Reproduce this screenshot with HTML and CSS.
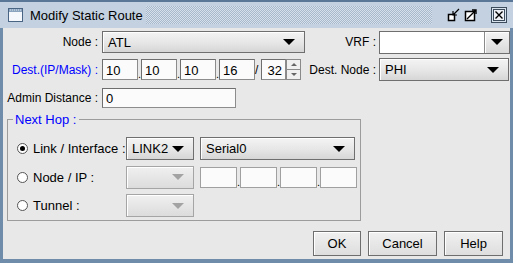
FILE: index.html
```html
<!DOCTYPE html>
<html lang="en">
<head>
  <meta charset="UTF-8" />
  <title>Modify Static Route</title>
  <link rel="stylesheet" href="styles.css">
</head>
<body>
  <div class="dialog">
    <div class="titlebar">
      <svg class="appicon" width="15" height="14" viewBox="0 0 15 14">
        <rect x="0.5" y="0.5" width="14" height="13" fill="#f4f8fc" stroke="#4a6584"/>
        <rect x="1" y="1" width="13" height="3" fill="#8aa4c0"/>
        <path d="M2 2h1M4 2h1M6 2h1M8 2h1M10 2h1M12 2h1" stroke="#dfe8f2"/>
      </svg>
      <span class="title">Modify Static Route</span>
      <span class="dots"></span>
      <svg class="tbtn" width="14" height="14" viewBox="0 0 14 14">
        <rect x="1.5" y="6.5" width="6" height="6" fill="#fff" stroke="#000" stroke-width="1.5"/>
        <path d="M12 1L6 7M6 3v4h4" fill="none" stroke="#000" stroke-width="1.2"/>
      </svg>
      <svg class="tbtn" width="14" height="14" viewBox="0 0 14 14">
        <rect x="1.5" y="3.5" width="9" height="9" fill="#fff" stroke="#000" stroke-width="1.5"/>
        <path d="M3 11L12 2M8 2h4v4" fill="none" stroke="#000" stroke-width="1.4"/>
      </svg>
      <svg class="tbtn close" width="16" height="16" viewBox="0 0 16 16">
        <rect x="0.5" y="0.5" width="15" height="15" fill="#d8e2ec" stroke="#3c4c5c"/>
        <rect x="2.5" y="2.5" width="11" height="11" fill="#eef2f6" stroke="#3c4c5c"/>
        <path d="M4.5 4.5l7 7M11.5 4.5l-7 7" stroke="#000" stroke-width="1.4"/>
      </svg>
    </div>

    <div class="content">
      <div class="row">
        <label class="lbl w-main">Node :</label>
        <div class="combo w-node"><span>ATL</span><i class="arrow"></i></div>
        <label class="lbl w-vrf">VRF :</label>
        <div class="ecombo w-vrfbox"><span class="field"></span><span class="abtn"><i class="arrow"></i></span></div>
      </div>

      <div class="row r2">
        <label class="lbl w-main blue">Dest.(IP/Mask) :</label>
        <div class="ip">
          <input class="txt oct" value="10"><span class="dot">.</span>
          <input class="txt oct" value="10"><span class="dot">.</span>
          <input class="txt oct" value="10"><span class="dot">.</span>
          <input class="txt oct" value="16"><span class="slash">/</span>
          <input class="txt mask" value="32">
          <span class="spin"><b class="up"></b><b class="down"></b></span>
        </div>
        <label class="lbl w-dest">Dest. Node :</label>
        <div class="combo w-phi"><span>PHI</span><i class="arrow"></i></div>
      </div>

      <div class="row r3">
        <label class="lbl w-main">Admin Distance :</label>
        <input class="txt admin" value="0">
      </div>

      <fieldset class="group">
        <legend>Next Hop :</legend>
        <div class="hop">
          <span class="radio on"></span><span class="hlbl">Link / Interface :</span>
          <div class="combo small"><span>LINK2</span><i class="arrow"></i></div>
          <div class="combo serial"><span>Serial0</span><i class="arrow"></i></div>
        </div>
        <div class="hop">
          <span class="radio"></span><span class="hlbl">Node / IP :</span>
          <div class="combo small off"><span></span><i class="arrow"></i></div>
          <div class="ip hopip">
            <input class="txt oct2"><span class="dot">.</span>
            <input class="txt oct2"><span class="dot">.</span>
            <input class="txt oct2"><span class="dot">.</span>
            <input class="txt oct2">
          </div>
        </div>
        <div class="hop">
          <span class="radio"></span><span class="hlbl">Tunnel :</span>
          <div class="combo small off"><span></span><i class="arrow"></i></div>
        </div>
      </fieldset>

      <div class="buttons">
        <button class="btn ok">OK</button>
        <button class="btn cancel">Cancel</button>
        <button class="btn help">Help</button>
      </div>
    </div>
  </div>
</body>
</html>
```

FILE: styles.css
```css
body {
  margin: 0;
  font-family: "Liberation Sans", Arial, sans-serif;
  font-size: 12px;
  color: #000;
}
.dialog {
  width: 513px;
  height: 263px;
  box-sizing: border-box;
  background: #6f8cab;
  display: flex;
  flex-direction: column;
}
.titlebar {
  height: 28px;
  box-sizing: border-box;
  display: flex;
  align-items: center;
  padding: 0 6px 0 8px;
  border-top: 2px solid #5b7797;
  background: #c3d1e0;
}
.appicon {
  margin-right: 7px;
}
.title {
  font-size: 13px;
  color: #000;
}
.dots {
  flex: 1;
  height: 18px;
  margin: 0 12px 0 3px;
  background: repeating-conic-gradient(#a8b9cc 0 25%, #d6e0ec 0 50%) 0 0 / 2px 2px;
}
.tbtn {
  margin-left: 3px;
}
.tbtn.close {
  margin-left: 13px;
}
.content {
  flex: 1;
  margin: 0 3px 4px 3px;
  background: #e8e8e8;
  padding-top: 3px;
  display: flex;
  flex-direction: column;
}
.row {
  display: flex;
  align-items: center;
  height: 22px;
}
.r2 {
  margin-top: 5px;
  height: 23px;
}
.r3 {
  margin-top: 6px;
  height: 21px;
}
.lbl {
  text-align: right;
  white-space: nowrap;
}
.blue {
  color: #0000ff;
}
.w-main {
  width: 95px;
  margin-right: 4px;
}
.w-vrf {
  width: 71px;
  margin-right: 3px;
}
.w-dest {
  width: 75px;
  margin-right: 3px;
}
.combo {
  box-sizing: border-box;
  height: 22px;
  border: 1px solid #6f6f6f;
  box-shadow: inset 1px 1px 0 #fff;
  background: linear-gradient(#f4f4f4, #e6e6e6 55%, #d6d6d6);
  display: flex;
  align-items: center;
  justify-content: space-between;
  padding: 0 9px 0 5px;
  font-size: 13px;
}
.w-node {
  width: 203px;
}
.w-phi {
  width: 130px;
  height: 23px;
}
.arrow {
  width: 0;
  height: 0;
  border-left: 6px solid transparent;
  border-right: 6px solid transparent;
  border-top: 6px solid #000;
}
.ecombo {
  box-sizing: border-box;
  width: 131px;
  height: 23px;
  border: 1px solid #6f6f6f;
  display: flex;
}
.ecombo .field {
  flex: 1;
  background: #fff;
  border-right: 1px solid #8a8a8a;
}
.ecombo .abtn {
  width: 24px;
  display: flex;
  align-items: center;
  justify-content: center;
  background: linear-gradient(#f4f4f4, #d9d9d9);
  box-shadow: inset 1px 1px 0 #fff;
}
.txt {
  box-sizing: border-box;
  height: 21px;
  margin: 0;
  border: 1px solid #8c8c8c;
  border-top-color: #6e6e6e;
  border-left-color: #6e6e6e;
  background: #fbfbfb;
  font-family: inherit;
  font-size: 13px;
  padding: 2px 2px 0 3px;
  color: #000;
}
.ip {
  display: flex;
  align-items: flex-end;
}
.oct {
  width: 36px;
}
.dot {
  width: 3px;
  font-size: 11px;
  line-height: 12px;
}
.slash {
  width: 6px;
  font-size: 12px;
  line-height: 19px;
}
.mask {
  width: 25px;
  text-align: right;
  padding-right: 3px;
}
.spin {
  width: 15px;
  height: 21px;
  display: flex;
  flex-direction: column;
}
.spin b {
  flex: 1;
  border: 1px solid #8a8a8a;
  background: #f0f0f0;
  position: relative;
}
.spin b.up {
  border-bottom: none;
}
.spin b::after {
  content: "";
  position: absolute;
  left: 4px;
  top: 3px;
  border-left: 3px solid transparent;
  border-right: 3px solid transparent;
}
.spin b.up::after {
  border-bottom: 3px solid #666;
}
.spin b.down::after {
  border-top: 3px solid #666;
}
.admin {
  width: 134px;
  height: 20px;
}
.group {
  margin: 4px 0 0 4px;
  width: 354px;
  height: 109px;
  box-sizing: border-box;
  border: 1px solid #9c9c9c;
  padding: 10px 0 0 9px;
}
.group legend {
  color: #0000ff;
  font-size: 13px;
  padding: 0 3px 0 2px;
  margin-left: -4px;
}
.hop {
  display: flex;
  align-items: center;
  height: 23px;
  margin-bottom: 5.5px;
}
.radio {
  width: 11px;
  height: 11px;
  border: 1px solid #555;
  border-radius: 50%;
  background: #fff;
  box-sizing: border-box;
  display: flex;
  align-items: center;
  justify-content: center;
}
.radio.on::after {
  content: "";
  width: 5px;
  height: 5px;
  border-radius: 50%;
  background: #000;
}
.hlbl {
  width: 93px;
  margin-left: 5px;
  font-size: 13px;
}
.small {
  width: 68px;
  height: 23px;
}
.serial {
  width: 155px;
  height: 23px;
  margin-left: 6px;
}
.combo.off {
  border-color: #a5a5a5;
  background: linear-gradient(#f0f0f0, #dcdcdc);
}
.combo.off .arrow {
  border-top-color: #a3a3a3;
}
.hopip {
  margin-left: 6px;
}
.oct2 {
  width: 37px;
  height: 21px;
  border-color: #a0a0a0;
}
.hopip .dot {
  width: 3px;
}
.buttons {
  display: flex;
  justify-content: flex-end;
  gap: 7px;
  margin-top: 10px;
  padding-right: 7px;
}
.btn {
  height: 25px;
  box-sizing: border-box;
  border: 1px solid #6e6e6e;
  box-shadow: inset 1px 1px 0 #fff;
  background: linear-gradient(#f0f0f0, #dedede);
  font-family: inherit;
  font-size: 13px;
  color: #000;
  padding: 0;
}
.ok {
  width: 48px;
}
.cancel {
  width: 69px;
}
.help {
  width: 59px;
}
```
